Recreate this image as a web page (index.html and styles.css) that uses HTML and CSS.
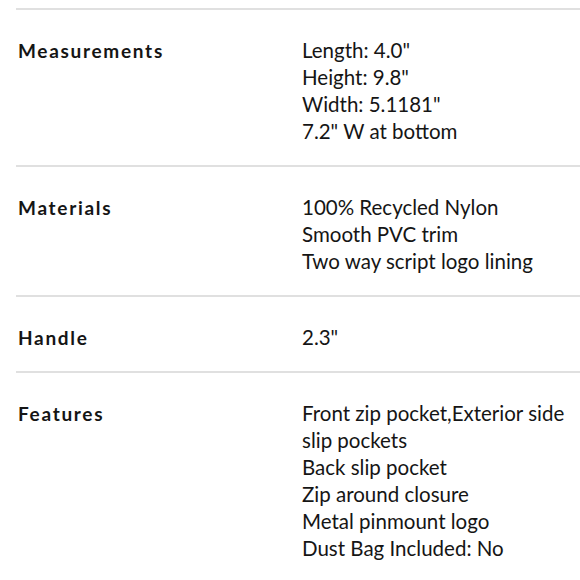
FILE: index.html
```html
<!DOCTYPE html>
<html>
<head>
<meta charset="utf-8">
<link rel="stylesheet" href="styles.css">
</head>
<body>
<div class="specs">
  <div class="row">
    <div class="label">Measurements</div>
    <div class="value">Length: 4.0"<br>Height: 9.8"<br>Width: 5.1181"<br>7.2" W at bottom</div>
  </div>
  <div class="row">
    <div class="label">Materials</div>
    <div class="value">100% Recycled Nylon<br>Smooth PVC trim<br>Two way script logo lining</div>
  </div>
  <div class="row">
    <div class="label">Handle</div>
    <div class="value">2.3"</div>
  </div>
  <div class="row last">
    <div class="label">Features</div>
    <div class="value">Front zip pocket,Exterior side slip pockets<br>Back slip pocket<br>Zip around closure<br>Metal pinmount logo<br>Dust Bag Included: No</div>
  </div>
</div>
</body>
</html>
```
FILE: styles.css
```css
html, body {
  margin: 0;
  padding: 0;
  background: #fff;
}
.specs {
  margin: 8px 0 0 16px;
  border-top: 2px solid #e0e0e0;
  font-family: Lato, "Noto Sans", sans-serif;
  color: #151515;
}
.row {
  display: grid;
  grid-template-columns: 284px 1fr;
  padding: 27px 0 20px 2px;
  border-bottom: 2px solid #e0e0e0;
}
.row.last {
  border-bottom: none;
}
.label {
  font-size: 19px;
  font-weight: 700;
  letter-spacing: 1.7px;
  line-height: 27px;
}
.value {
  font-size: 20.5px;
  line-height: 27px;
  padding-right: 4px;
}
```
